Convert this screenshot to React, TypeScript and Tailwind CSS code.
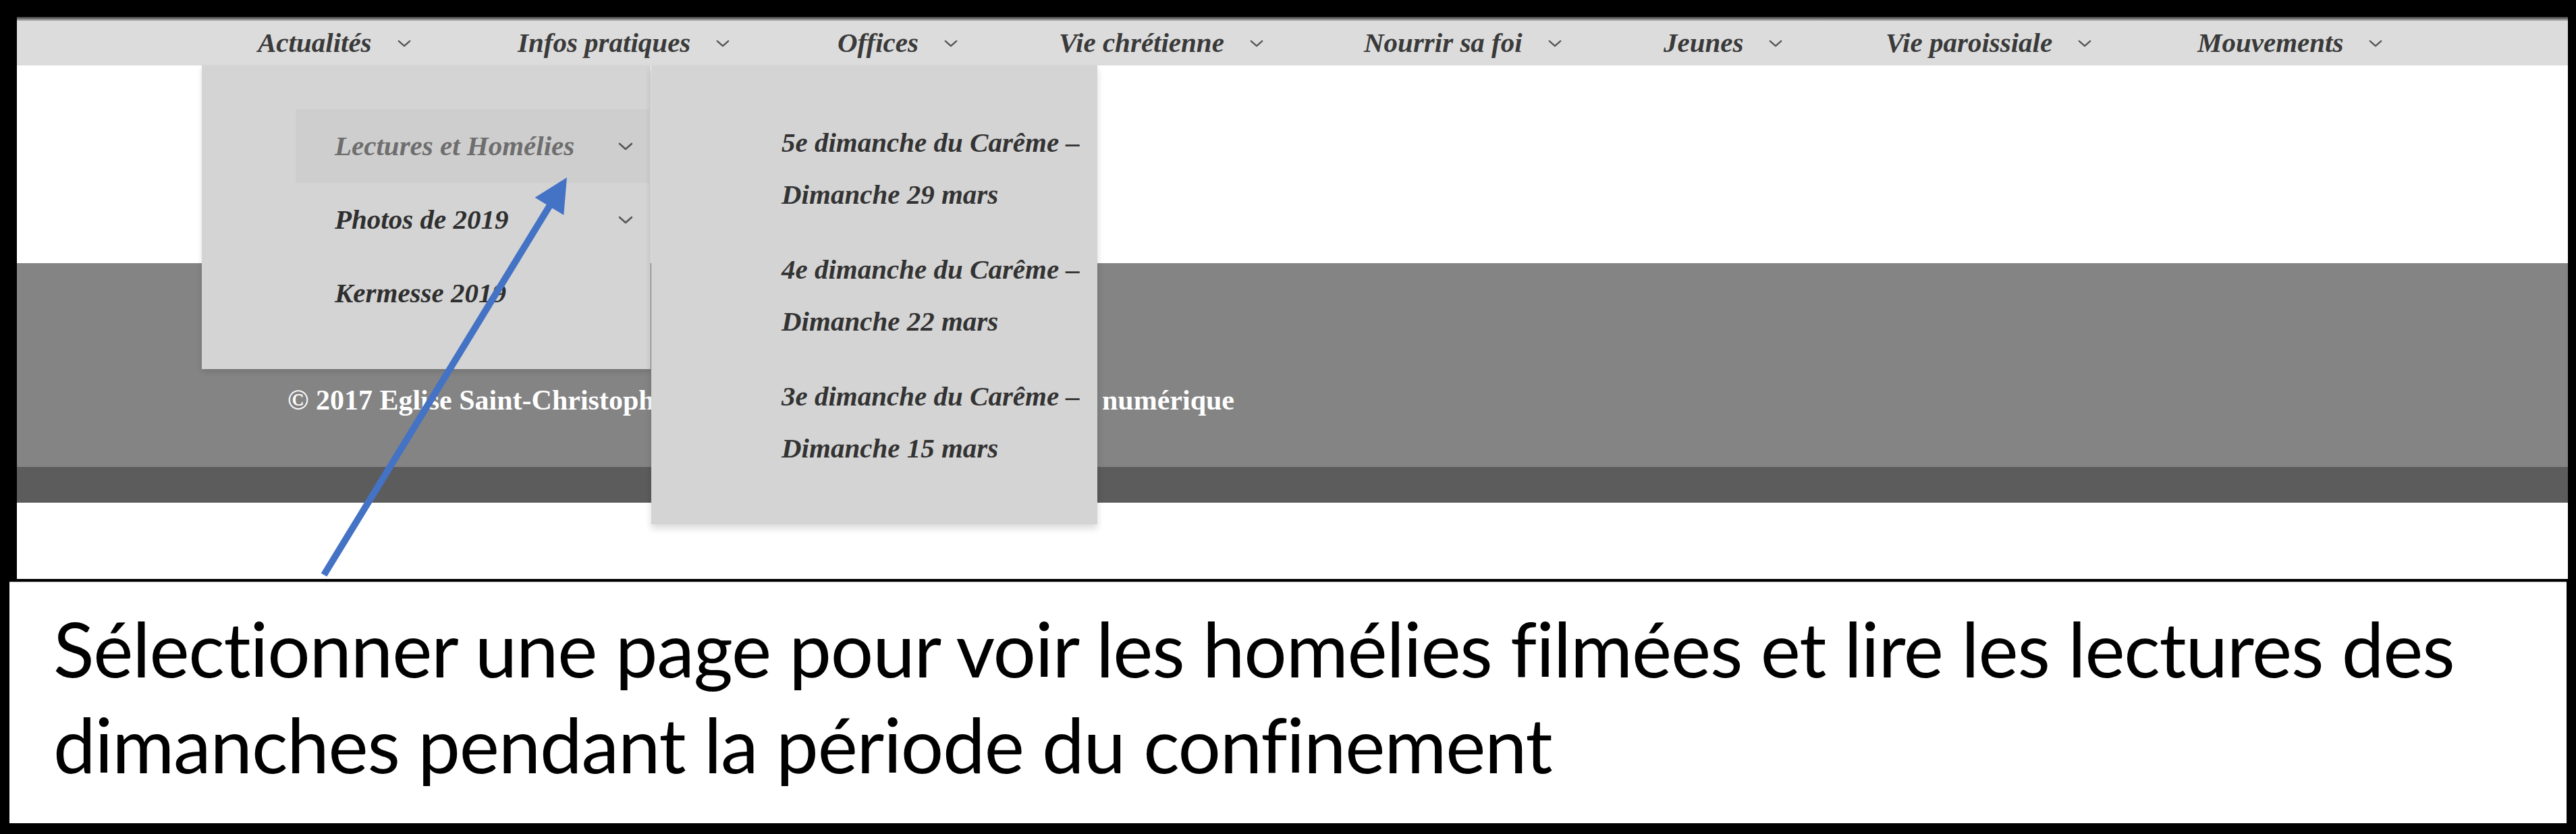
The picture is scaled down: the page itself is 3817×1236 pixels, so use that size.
const NAV_ITEMS: { label: string; width: string }[] = [
  { label: 'Actualités', width: 'w-[385px]' },
  { label: 'Infos pratiques', width: 'w-[474px]' },
  { label: 'Offices', width: 'w-[328px]' },
  { label: 'Vie chrétienne', width: 'w-[452px]' },
  { label: 'Nourrir sa foi', width: 'w-[444px]' },
  { label: 'Jeunes', width: 'w-[329px]' },
  { label: 'Vie paroissiale', width: 'w-[462px]' },
  { label: 'Mouvements', width: 'w-[300px]' },
];

const SUB_ITEMS = [
  { label: 'Lectures et Homélies', active: true, hasChildren: true },
  { label: 'Photos de 2019', active: false, hasChildren: true },
  { label: 'Kermesse 2019', active: false, hasChildren: false },
];

const HOMILIES = [
  ['5e dimanche du Carême –', 'Dimanche 29 mars'],
  ['4e dimanche du Carême –', 'Dimanche 22 mars'],
  ['3e dimanche du Carême –', 'Dimanche 15 mars'],
];

const serif = "font-['Liberation_Serif','Times_New_Roman',serif]";

function Chevron({ className = '' }: { className?: string }) {
  return (
    <svg className={className} viewBox="0 0 22 12" fill="none" aria-hidden="true">
      <polyline points="2,2 11,10 20,2" stroke="#555" strokeWidth="2.6" strokeLinecap="round" strokeLinejoin="round" />
    </svg>
  );
}

function NavBar() {
  return (
    <div className="flex flex-col h-[72px]">
      <div className="h-[6px] bg-linear-to-b from-[#3a3a3a] to-[#c4c4c4]" />
      <nav className={`flex-1 flex items-center pl-[357px] bg-[#dcdcdc] ${serif}`}>
        {NAV_ITEMS.map((item) => (
          <div key={item.label} className={`${item.width} shrink-0 flex items-center gap-[38px]`}>
            <span className="text-[41px] italic font-bold text-[#3a3a3a] whitespace-nowrap">
              {item.label}
            </span>
            <Chevron className="w-[20px] h-[11px]" />
          </div>
        ))}
      </nav>
    </div>
  );
}

function ActualitesMenu() {
  return (
    <div className={`absolute left-[274px] top-[72px] w-[665px] h-[450px] bg-[#d4d4d4] shadow-[0_4px_8px_rgba(0,0,0,0.12)] pt-[65px] pl-[139px] pr-[2px] ${serif}`}>
      {SUB_ITEMS.map((item) => (
        <div
          key={item.label}
          className={`h-[109px] flex items-center justify-between pl-[58px] pr-[24px] ${item.active ? 'bg-[#cecece]' : ''}`}
        >
          <span
            className={`text-[41px] italic font-bold whitespace-nowrap ${item.active ? 'text-[#6e6e6e]' : 'text-[#2f2f2f]'}`}
          >
            {item.label}
          </span>
          {item.hasChildren && <Chevron className="w-[22px] h-[12px]" />}
        </div>
      ))}
    </div>
  );
}

function HomiliesMenu() {
  return (
    <div className={`absolute left-[940px] top-[72px] w-[661px] h-[680px] bg-[#d4d4d4] shadow-[0_6px_10px_rgba(0,0,0,0.15)] pt-[76px] pl-[193px] flex flex-col gap-[34px] ${serif}`}>
      {HOMILIES.map(([first, second]) => (
        <div key={second} className="flex flex-col text-[41px] leading-[77px] italic font-bold text-[#333]">
          <span className="whitespace-nowrap">{first}</span>
          <span className="whitespace-nowrap">{second}</span>
        </div>
      ))}
    </div>
  );
}

function Website() {
  return (
    <div className="relative ml-[25px] mt-[25px] w-[3780px] h-[833px] bg-white flex flex-col">
      <NavBar />
      <div className="h-[293px] bg-white" />
      {/* footer: the middle of the line sits under the open submenu */}
      <footer className={`h-[302px] bg-[#848484] flex items-start pt-[172px] pl-[401px] ${serif}`}>
        <span className="w-[1207px] shrink-0 whitespace-nowrap text-[42px] font-bold text-white">
          © 2017 Eglise Saint-Christophe
        </span>
        <span className="text-[42px] font-bold text-white whitespace-nowrap">numérique</span>
      </footer>
      <div className="h-[53px] bg-[#5c5c5c]" />
      <div className="flex-1 bg-white" />
      <ActualitesMenu />
      <HomiliesMenu />
    </div>
  );
}

function Caption() {
  return (
    <div className="ml-[14px] mt-[4px] w-[3789px] h-[358px] bg-white pl-[65px] pt-[27px] border-t border-[#bbb]">
      <p className="font-['Lato','Carlito','Liberation_Sans',sans-serif] text-[112px] leading-[142px] tracking-[-1.2px] text-black">
        Sélectionner une page pour voir les homélies filmées et lire les lectures des
        <br />
        dimanches pendant la période du confinement
      </p>
    </div>
  );
}

function Arrow() {
  return (
    <svg className="absolute inset-0 w-full h-full pointer-events-none" viewBox="0 0 3817 1236" aria-hidden="true">
      <line x1="480" y1="852" x2="815" y2="304" stroke="#4472c4" strokeWidth="10" />
      <polygon points="840,263 835.3,318.8 792.6,292.7" fill="#4472c4" />
    </svg>
  );
}

export default function App() {
  return (
    <div className="relative w-[3817px] h-[1236px] bg-black overflow-hidden flex flex-col">
      <Website />
      <Caption />
      <Arrow />
    </div>
  );
}
